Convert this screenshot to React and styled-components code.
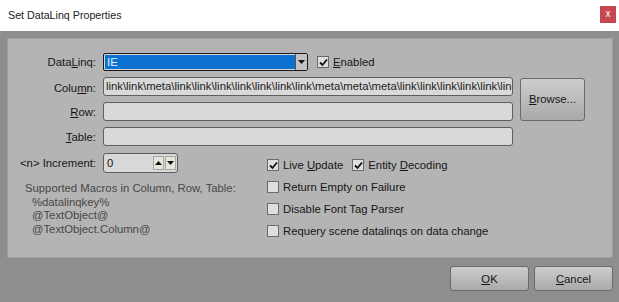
import React from 'react'
import styled, { createGlobalStyle } from 'styled-components'

const GlobalStyle = createGlobalStyle`
  html, body {
    margin: 0;
    padding: 0;
    background: #8e8e8e;
  }
  * {
    box-sizing: border-box;
  }
`

const COLUMN_TEXT =
  'link\\link\\meta\\link\\link\\link\\link\\link\\link\\link\\meta\\meta\\meta\\link\\link\\link\\link\\link\\link\\link\\link\\link'

export default function App() {
  return (
    <Window>
      <GlobalStyle />
      <TitleBar>
        <Title>Set DataLinq Properties</Title>
        <CloseButton>x</CloseButton>
      </TitleBar>

      <Body>
        <Panel>
          <Fields>
            <Label>Data<u>L</u>inq:</Label>
            <ComboRow>
              <Combo>
                <ComboValue>IE</ComboValue>
                <ComboArrow>
                  <svg width="7" height="4" viewBox="0 0 7 4"><path d="M0 0h7L3.5 4z" fill="#111" /></svg>
                </ComboArrow>
              </Combo>
              <Check checked label={<><u>E</u>nabled</>} />
            </ComboRow>

            <Label>Colu<u>m</u>n:</Label>
            <TextBox>{COLUMN_TEXT}</TextBox>
            <BrowseButton><u>B</u>rowse...</BrowseButton>

            <Label><u>R</u>ow:</Label>
            <TextBox />

            <Label><u>T</u>able:</Label>
            <TextBox />
          </Fields>

          <Lower>
            <LeftCol>
              <IncrementRow>
                <Label>&lt;n&gt; Increment:</Label>
                <Spinner>
                  <SpinValue>0</SpinValue>
                  <SpinButtons>
                    <SpinBtn>
                      <svg width="7" height="4" viewBox="0 0 7 4"><path d="M0 4h7L3.5 0z" fill="#111" /></svg>
                    </SpinBtn>
                    <SpinBtn>
                      <svg width="7" height="4" viewBox="0 0 7 4"><path d="M0 0h7L3.5 4z" fill="#111" /></svg>
                    </SpinBtn>
                  </SpinButtons>
                </Spinner>
              </IncrementRow>
              <Macros>
                <MacroLine>Supported Macros in Column, Row, Table:</MacroLine>
                <MacroLine $indent>%datalinqkey%</MacroLine>
                <MacroLine $indent>@TextObject@</MacroLine>
                <MacroLine $indent>@TextObject.Column@</MacroLine>
              </Macros>
            </LeftCol>

            <RightCol>
              <CheckRow>
                <Check checked label={<>Live <u>U</u>pdate</>} />
                <Check checked label={<>Entity <u>D</u>ecoding</>} />
              </CheckRow>
              <CheckRow>
                <Check label="Return Empty on Failure" />
              </CheckRow>
              <CheckRow>
                <Check label="Disable Font Tag Parser" />
              </CheckRow>
              <CheckRow>
                <Check label="Requery scene datalinqs on data change" />
              </CheckRow>
            </RightCol>
          </Lower>
        </Panel>

        <Footer>
          <DialogButton><u>O</u>K</DialogButton>
          <DialogButton><u>C</u>ancel</DialogButton>
        </Footer>
      </Body>
    </Window>
  )
}

function Check({ checked, label }) {
  return (
    <CheckItem>
      <Box>
        {checked && (
          <svg width="9" height="9" viewBox="0 0 9 9">
            <path d="M1 4.5l2.5 2.5L8 1.5" stroke="#111" strokeWidth="1.8" fill="none" />
          </svg>
        )}
      </Box>
      <span>{label}</span>
    </CheckItem>
  )
}

const Window = styled.div`
  width: 619px;
  height: 302px;
  display: flex;
  flex-direction: column;
  font-family: "Liberation Sans", Arial, sans-serif;
  font-size: 11.3px;
  color: #151515;
  overflow: hidden;
`

const TitleBar = styled.div`
  height: 31px;
  background: #ffffff;
  display: flex;
  align-items: flex-start;
  justify-content: space-between;
  padding: 0 3px 0 8px;
`

const Title = styled.div`
  font-family: "Liberation Sans", Arial, sans-serif;
  font-size: 10.7px;
  color: #222;
  margin-top: 9px;
`

const CloseButton = styled.div`
  width: 16px;
  height: 17px;
  margin-top: 6px;
  background: #c8464e;
  color: #fff;
  font-size: 10px;
  line-height: 15px;
  text-align: center;
`

const Body = styled.div`
  flex: 1;
  background: #8e8e8e;
  padding: 7px 6px 0 7px;
  display: flex;
  flex-direction: column;
`

const Panel = styled.div`
  height: 220px;
  background: #b4b4b4;
  border: 1px solid #9c9c9c;
  border-top-color: #a2a2a2;
  display: flex;
  flex-direction: column;
  padding-top: 14px;
`

const Fields = styled.div`
  display: grid;
  grid-template-columns: 88px 410px 65px;
  grid-template-rows: 18px 19px 19px 19px;
  column-gap: 7px;
  row-gap: 6px;
  align-items: center;
  & > :nth-child(3) {
    margin-top: 2px;
  }
`

const Label = styled.div`
  text-align: right;
  white-space: nowrap;
  color: #161616;
  u {
    text-decoration-thickness: 1px;
  }
`

const ComboRow = styled.div`
  grid-column: 2 / 4;
  display: flex;
  align-items: center;
  gap: 9px;
`

const Combo = styled.div`
  width: 205px;
  height: 18px;
  border: 1px solid #1a1a1a;
  border-radius: 2px;
  background: #d8d8d8;
  display: flex;
  padding: 1px 0 1px 1px;
`

const ComboValue = styled.div`
  flex: 1;
  background: #0b72d2;
  color: #e8f0ff;
  padding-left: 2px;
  line-height: 14px;
`

const ComboArrow = styled.div`
  width: 12px;
  margin-top: -1px;
  margin-bottom: -1px;
  border-left: 1px solid #555;
  background: #c2c2c2;
  display: flex;
  align-items: center;
  justify-content: center;
`

const TextBox = styled.div`
  grid-column: 2;
  height: 19px;
  background: #d9d9d9;
  border: 1px solid #5e5e5e;
  border-radius: 3px;
  padding: 0 2px;
  line-height: 17px;
  white-space: nowrap;
  overflow: hidden;
  color: #1a1a1a;
`

const BrowseButton = styled.div`
  grid-column: 3;
  grid-row: 2 / 4;
  height: 43px;
  align-self: center;
  display: flex;
  align-items: center;
  justify-content: center;
  border: 1px solid #6a6a6a;
  border-radius: 3px;
  background: linear-gradient(#cdcdcd, #a9a9a9);
`

const Lower = styled.div`
  display: grid;
  grid-template-columns: 259px 1fr;
  margin-top: 7px;
`

const LeftCol = styled.div`
  display: flex;
  flex-direction: column;
`

const IncrementRow = styled.div`
  display: grid;
  grid-template-columns: 88px 75px;
  column-gap: 7px;
  align-items: center;
  height: 20px;
`

const Spinner = styled.div`
  height: 20px;
  background: #d9d9d9;
  border: 1px solid #5e5e5e;
  border-radius: 3px;
  display: flex;
  align-items: center;
  padding: 0 1px 0 3px;
`

const SpinValue = styled.div`
  flex: 1;
`

const SpinButtons = styled.div`
  display: flex;
  gap: 1px;
`

const SpinBtn = styled.div`
  width: 11px;
  height: 14px;
  background: #e6e6dc;
  border: 1px solid #a8a8a0;
  display: flex;
  align-items: center;
  justify-content: center;
`

const Macros = styled.div`
  margin-top: 9px;
  padding-left: 17px;
  color: #474747;
  line-height: 13.5px;
`

const MacroLine = styled.div`
  padding-left: ${p => (p.$indent ? '7px' : '0')};
  white-space: nowrap;
`

const RightCol = styled.div`
  display: flex;
  flex-direction: column;
  margin-top: 1px;
`

const CheckRow = styled.div`
  height: 22px;
  display: flex;
  align-items: center;
  gap: 9px;
`

const CheckItem = styled.div`
  display: flex;
  align-items: center;
  gap: 4px;
  white-space: nowrap;
  color: #161616;
`

const Box = styled.div`
  width: 12px;
  height: 12px;
  border: 1px solid #6a6a6a;
  background: #dedede;
  display: flex;
  align-items: center;
  justify-content: center;
`

const Footer = styled.div`
  display: flex;
  justify-content: flex-end;
  gap: 5px;
  padding-top: 8px;
`

const DialogButton = styled.div`
  width: 79px;
  height: 25px;
  display: flex;
  align-items: center;
  justify-content: center;
  border: 1px solid #6a6a6a;
  border-radius: 3px;
  background: linear-gradient(#cdcdcd, #a9a9a9);
`
